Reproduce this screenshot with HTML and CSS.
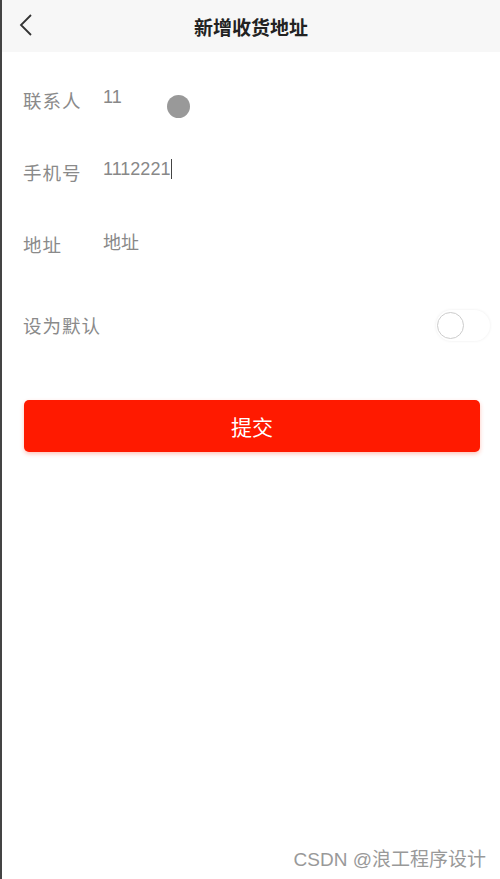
FILE: index.html
```html
<!DOCTYPE html>
<html lang="zh-CN">
<head>
  <meta charset="UTF-8">
  <title>新增收货地址</title>
  <meta name="viewport" content="width=device-width, initial-scale=1">
  <link rel="stylesheet" href="styles.css">
</head>
<body>
  <div class="page">
    <div class="navbar">
      <span class="back">
        <svg width="16" height="24" viewBox="0 0 16 24"><path d="M13 2 L3 12 L13 22" fill="none" stroke="#333" stroke-width="1.8"/></svg>
      </span>
      <h1>新增收货地址</h1>
    </div>

    <div class="form">
      <div class="row row-name">
        <span class="label">联系人</span>
        <span class="value">11</span>
        <span class="touch-dot"></span>
      </div>
      <div class="row">
        <span class="label">手机号</span>
        <span class="value">1112221<span class="caret"></span></span>
      </div>
      <div class="row">
        <span class="label">地址</span>
        <span class="value">地址</span>
      </div>
      <div class="row row-switch">
        <span class="label">设为默认</span>
        <span class="switch"><span class="knob"></span></span>
      </div>
    </div>

    <button class="submit">提交</button>

    <div class="mark">CSDN @浪工程序设计</div>
  </div>
</body>
</html>
```

FILE: styles.css
```css
body {
  margin: 0;
  font-family: "Noto Sans CJK SC", "Liberation Sans", sans-serif;
  background: #fff;
}
.page {
  position: relative;
  height: 879px;
  border-left: 2px solid #444;
  box-sizing: border-box;
  overflow: hidden;
}
.navbar {
  height: 52px;
  background: #f7f7f7;
  display: flex;
  align-items: center;
  justify-content: center;
  position: relative;
}
.navbar h1 {
  margin: 0;
  font-size: 19px;
  font-weight: bold;
  color: #222;
}
.back {
  position: absolute;
  left: 16px;
  top: 13px;
}
.form {
  padding: 0 0 0 21px;
}
.row {
  display: flex;
  align-items: center;
  height: 72px;
  position: relative;
}
.row-name {
  margin-top: 9px;
}
.label {
  width: 80px;
  font-size: 18.5px;
  letter-spacing: 1px;
  color: #8a8a8a;
  padding-top: 6px;
  white-space: nowrap;
}
.value {
  font-size: 18px;
  color: #888;
  font-family: "Liberation Sans", "Noto Sans CJK SC", sans-serif;
  display: flex;
  align-items: center;
}
.caret {
  display: inline-block;
  width: 1px;
  height: 20px;
  background: #444;
  margin-left: 1px;
}
.touch-dot {
  position: absolute;
  left: 144px;
  top: 34px;
  width: 23px;
  height: 23px;
  border-radius: 50%;
  background: #999;
}
.row-switch {
  height: 90px;
}
.switch {
  margin-left: auto;
  margin-right: 10px;
  width: 54px;
  height: 31px;
  border-radius: 16px;
  background: #fff;
  box-shadow: 0 0 3px rgba(0,0,0,0.08);
  position: relative;
  margin-top: 6px;
}
.knob {
  position: absolute;
  left: 1px;
  top: 2px;
  width: 27px;
  height: 27px;
  border-radius: 50%;
  border: 1.5px solid #ccc;
  background: #fff;
  box-sizing: border-box;
}
.submit {
  display: block;
  margin: 33px 0 0 22px;
  width: 456px;
  height: 52px;
  border: none;
  border-radius: 5px;
  background: #ff1a00;
  color: #fff;
  font-size: 21px;
  font-family: "Noto Sans CJK SC", sans-serif;
  box-shadow: 0 2px 4px rgba(255,60,30,0.3);
}
.mark {
  position: absolute;
  right: 14px;
  bottom: 8px;
  font-size: 19px;
  color: #999;
  font-family: "Liberation Sans", "Noto Sans CJK SC", sans-serif;
}
```
